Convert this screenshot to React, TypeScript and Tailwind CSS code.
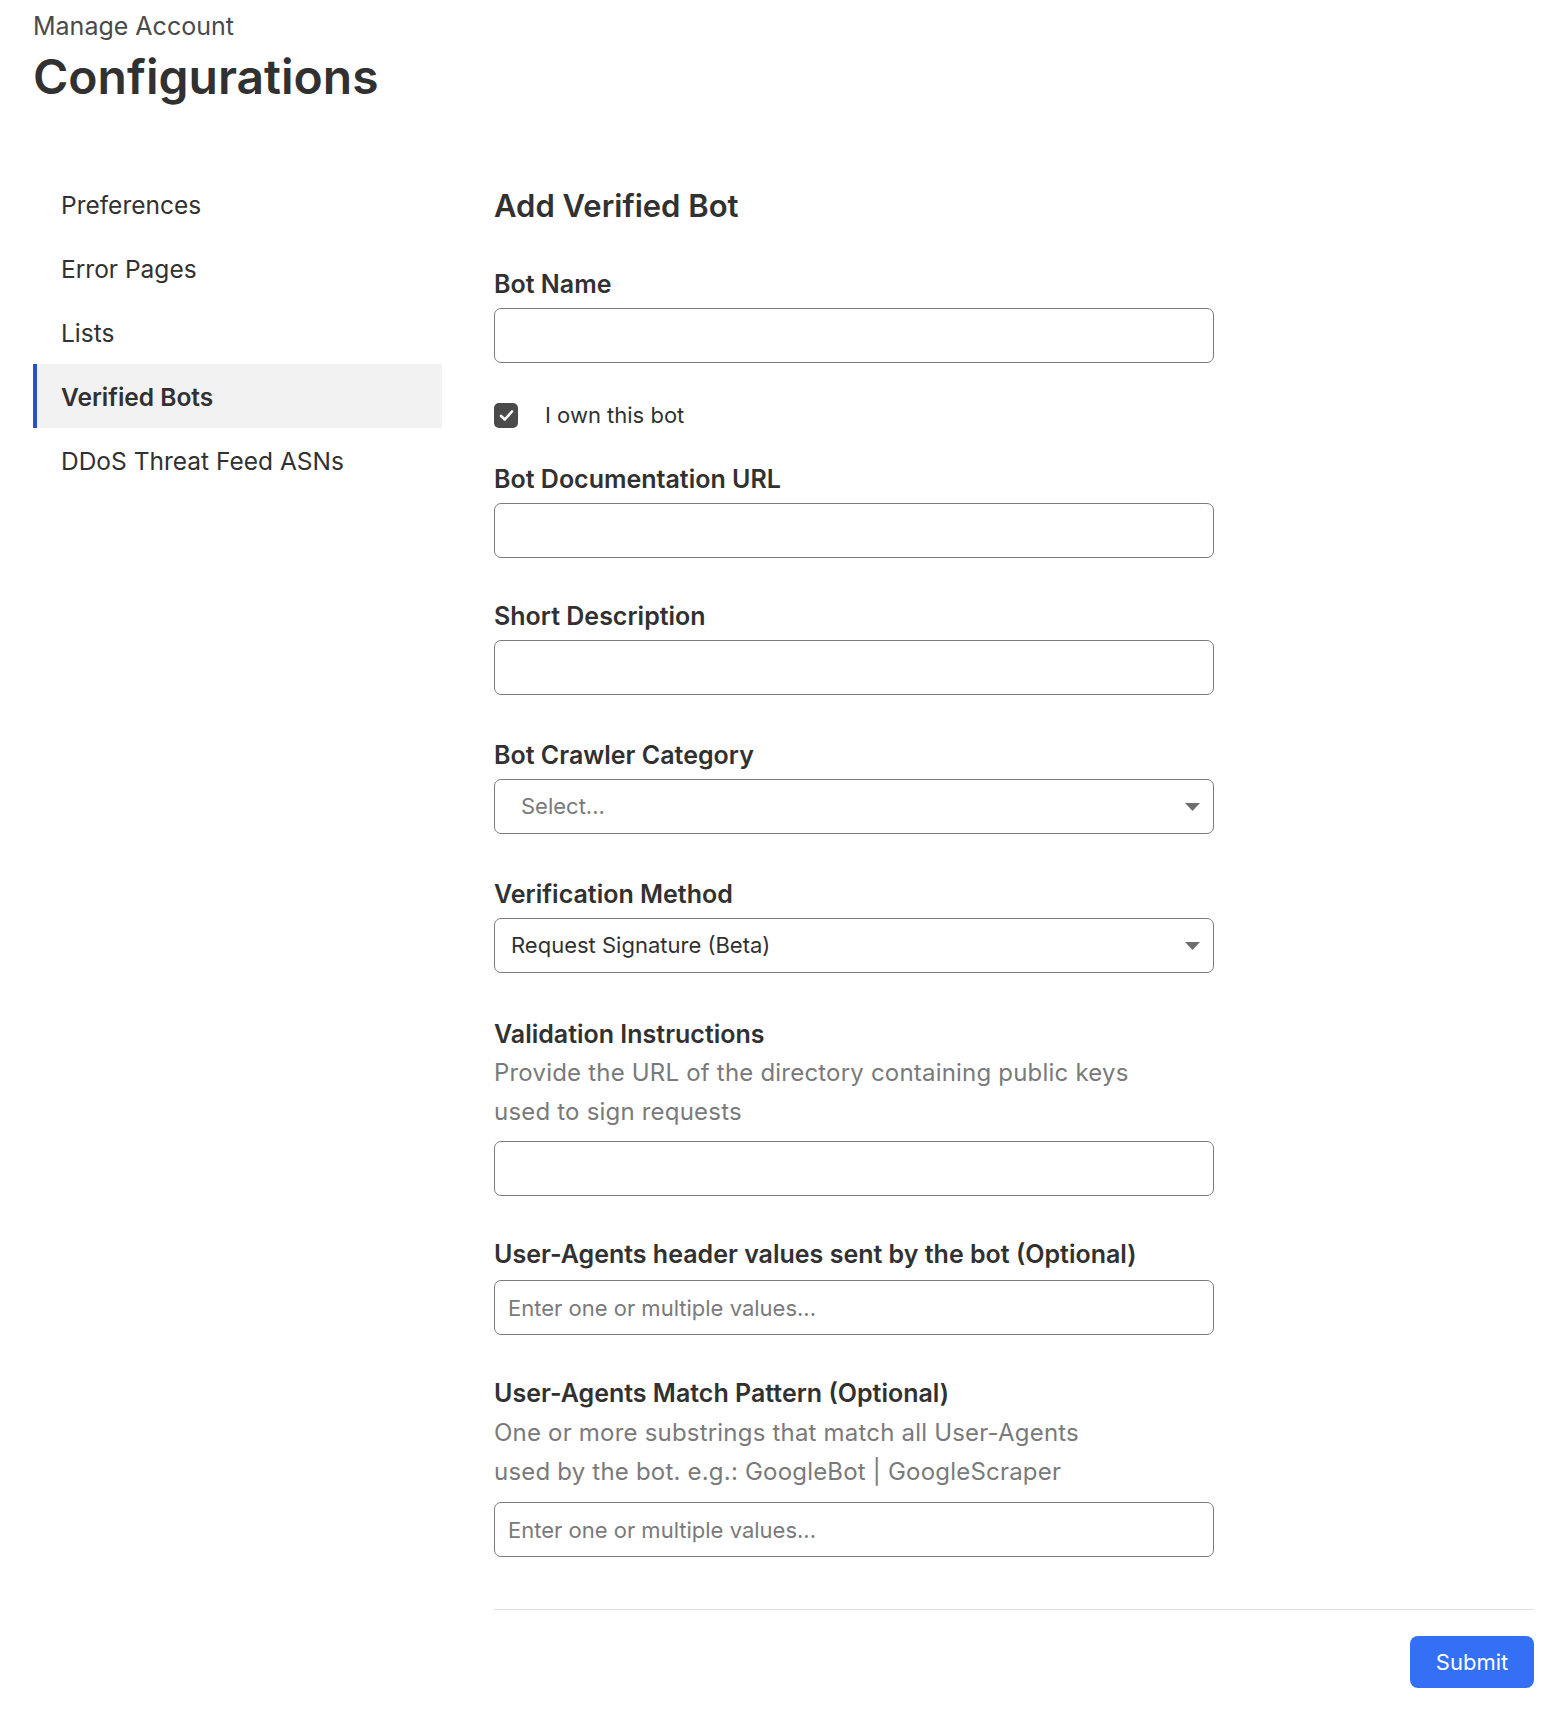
import React from "react";

const font = { fontFamily: "Inter, 'Noto Sans', sans-serif" };

function Label({ children, mb = "mb-2" }: { children: React.ReactNode; mb?: string }) {
  return <div className={`text-[25px] leading-[32px] font-semibold text-[#313131] ${mb}`}>{children}</div>;
}

function TextInput({ placeholder }: { placeholder?: string }) {
  return (
    <input
      type="text"
      placeholder={placeholder}
      className="block w-[720px] h-[55px] rounded-[7px] border border-[#7b7b7b] bg-white px-[13px] text-[22px] text-[#313131] placeholder:text-[#7a7a7a] outline-none"
    />
  );
}

function Arrow() {
  return (
    <svg width="15" height="8" viewBox="0 0 15 8" className="shrink-0">
      <path d="M0 0 L15 0 L7.5 8 Z" fill="#6e6e6e" />
    </svg>
  );
}

function Select({ value, placeholder }: { value?: string; placeholder?: string }) {
  return (
    <div className="flex items-center w-[720px] h-[55px] rounded-[7px] border border-[#7b7b7b] bg-white pr-[13px]">
      {value ? (
        <span className="flex-1 pl-[16px] text-[22px] text-[#313131]">{value}</span>
      ) : (
        <span className="flex-1 pl-[26px] text-[22px] text-[#7a7a7a]">{placeholder}</span>
      )}
      <Arrow />
    </div>
  );
}

export default function App() {
  const nav = ["Preferences", "Error Pages", "Lists", "Verified Bots", "DDoS Threat Feed ASNs"];
  return (
    <div style={font} className="min-h-[1718px] bg-white text-[#313131] pl-[33px] pr-[26px] pt-[10px]">
      <div className="text-[25px] leading-[32px] text-[#4a4a4a]">Manage Account</div>
      <h1 className="mt-[6px] text-[48px] leading-[58px] font-semibold text-[#313131]">Configurations</h1>

      <div className="mt-[66px] flex gap-[52px]">
        <nav className="w-[409px] shrink-0 flex flex-col">
          {nav.map((n) =>
            n === "Verified Bots" ? (
              <div
                key={n}
                className="h-[64px] flex items-center pl-[24px] pt-[3px] bg-[#f2f2f2] border-l-4 border-[#2453c8] text-[24.5px] font-semibold text-[#313131]"
              >
                {n}
              </div>
            ) : (
              <div key={n} className="h-[64px] flex items-center pl-[28px] pt-[3px] text-[24.5px] text-[#313131]">
                {n}
              </div>
            )
          )}
        </nav>

        <main className="flex-1 pt-[16px]">
          <h2 className="text-[31px] leading-[36px] font-semibold text-[#313131]">Add Verified Bot</h2>

          <div className="mt-[44px]">
            <Label>Bot Name</Label>
            <TextInput />
          </div>

          <label className="mt-[40px] flex items-center gap-[27px] h-[25px]">
            <span className="w-[24px] h-[25px] rounded-[5px] bg-[#4a4a4a] flex items-center justify-center">
              <svg width="15" height="13" viewBox="0 0 15 13">
                <path d="M2 7 L5.8 10.5 L13 2.5" fill="none" stroke="#fff" strokeWidth="2.6" strokeLinecap="round" strokeLinejoin="round" />
              </svg>
            </span>
            <span className="text-[22px] text-[#313131]">I own this bot</span>
          </label>

          <div className="mt-[35px]">
            <Label>Bot Documentation URL</Label>
            <TextInput />
          </div>

          <div className="mt-[42px]">
            <Label>Short Description</Label>
            <TextInput />
          </div>

          <div className="mt-[44px]">
            <Label>Bot Crawler Category</Label>
            <Select placeholder="Select..." />
          </div>

          <div className="mt-[44px]">
            <Label>Verification Method</Label>
            <Select value="Request Signature (Beta)" />
          </div>

          <div className="mt-[45px]">
            <Label mb="mb-0">Validation Instructions</Label>
            <p className="mt-[3px] text-[24px] leading-[39px] tracking-[0.2px] text-[#7a7a7a] w-[720px]">
              Provide the URL of the directory containing public keys
              <br />
              used to sign requests
            </p>
            <div className="mt-[10px]">
              <TextInput />
            </div>
          </div>

          <div className="mt-[42px]">
            <Label mb="mb-[10px]">User-Agents header values sent by the bot (Optional)</Label>
            <TextInput placeholder="Enter one or multiple values..." />
          </div>

          <div className="mt-[42px]">
            <Label mb="mb-0">User-Agents Match Pattern (Optional)</Label>
            <p className="mt-[4px] text-[24px] leading-[39px] tracking-[0.2px] text-[#7a7a7a]">
              One or more substrings that match all User-Agents
              <br />
              used by the bot. e.g.: GoogleBot | GoogleScraper
            </p>
            <div className="mt-[11px]">
              <TextInput placeholder="Enter one or multiple values..." />
            </div>
          </div>

          <div className="mt-[52px] border-t border-[#e0e0e0]" />
          <div className="mt-[26px] flex justify-end">
            <button className="w-[124px] h-[52px] rounded-[8px] bg-[#3370f5] text-white text-[22px]">Submit</button>
          </div>
        </main>
      </div>
    </div>
  );
}
